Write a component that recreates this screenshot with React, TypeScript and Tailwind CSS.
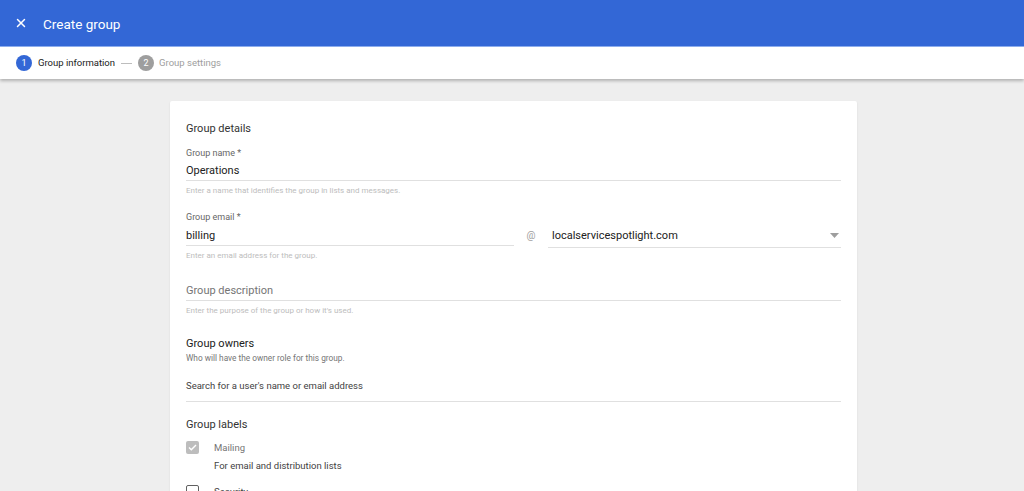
import { X } from 'lucide-react'

function Field({ label, value, placeholder, helper, pt = 4 }: { label?: string; value?: string; placeholder?: string; helper?: string; pt?: number }) {
  return (
    <div className="flex flex-col">
      {label && <div className="text-[9px] leading-[12px] text-[#666]">{label}</div>}
      <div className={(pt === 5 ? 'pt-[5px]' : pt === 0 ? 'pt-0' : 'pt-[4px]') + ' border-b border-[#e0e0e0] pb-[1px] leading-[16px] text-[11px]'}>
        <span className={value ? 'text-[#212121]' : 'text-[#757575]'}>{value ?? placeholder}</span>
      </div>
      {helper && <div className="text-[8px] leading-[10px] text-[#bdbdbd] mt-[5px]">{helper}</div>}
    </div>
  )
}

export default function App() {
  return (
    <div className="h-[491px] overflow-hidden bg-[#eeeeee] font-['Roboto',sans-serif]">
      <div className="h-[47px] bg-[#3367d6] flex items-center pl-[14px] gap-[15px] border-b border-[#8fb0f0]">
        <X size={14} strokeWidth={2.5} className="text-white" />
        <span className="text-white text-[13.5px] leading-[18px] pt-[1px]">Create group</span>
      </div>
      <div className="h-[32px] bg-white flex items-center px-[16px] shadow-[0_2px_3px_rgba(0,0,0,0.25)] relative">
        <div className="w-[16px] h-[16px] rounded-full bg-[#3367d6] text-white text-[9px] leading-[16px] flex items-center justify-center">1</div>
        <span className="ml-[6px] text-[9.5px] leading-[14px] text-[#212121]">Group information</span>
        <div className="ml-[6px] w-[11px] h-px bg-[#bdbdbd]" />
        <div className="ml-[6px] w-[16px] h-[16px] rounded-full bg-[#9e9e9e] text-white text-[9px] leading-[16px] flex items-center justify-center">2</div>
        <span className="ml-[5px] text-[9.5px] leading-[14px] text-[#9e9e9e]">Group settings</span>
      </div>
      <div className="flex justify-start pl-[170px] pt-[22px]">
        <div className="w-[687px] bg-white rounded-t-[2px] shadow-[0_1px_2px_rgba(0,0,0,0.1)] px-[16px] pt-[20px] pb-[40px] flex flex-col">
          <div className="text-[11px] leading-[16px] text-[#333]">Group details</div>
          <div className="mt-[10px]">
            <Field label="Group name *" value="Operations" helper="Enter a name that identifies the group in lists and messages." />
          </div>
          <div className="mt-[15px] flex items-start">
            <div className="w-[328px]">
              <Field label="Group email *" value="billing" pt={5} helper="Enter an email address for the group." />
            </div>
            <div className="w-[34px] pt-[18px] text-[10px] leading-[14px] text-[#9e9e9e] text-center">@</div>
            <div className="flex-1 pt-[12px]">
              <div className="border-b border-[#e0e0e0] pt-[5px] pb-[3px] pl-[4px] flex items-center justify-between leading-[16px]">
                <span className="text-[11px] text-[#212121]">localservicespotlight.com</span>
                <svg width="9" height="5" viewBox="0 0 9 5" className="mr-[2px] mb-[2px]"><path d="M0 0h9L4.5 5z" fill="#9e9e9e" /></svg>
              </div>
            </div>
          </div>
          <div className="mt-[22px]">
            <Field placeholder="Group description" pt={0} helper="Enter the purpose of the group or how it's used." />
          </div>
          <div className="mt-[20px] text-[11px] leading-[16px] text-[#212121]">Group owners</div>
          <div className="mt-[1px] text-[8.3px] leading-[10px] text-[#757575]">Who will have the owner role for this group.</div>
          <div className="mt-[14px] border-b border-[#e0e0e0] pb-[8px] leading-[14px]">
            <span className="text-[9.5px] text-[#424242]">Search for a user's name or email address</span>
          </div>
          <div className="mt-[15px] text-[11px] leading-[16px] text-[#333]">Group labels</div>
          <div className="mt-[8px] flex items-start">
            <div className="w-[13px] h-[13px] rounded-[2px] bg-[#bdbdbd] flex items-center justify-center">
              <svg width="9" height="7" viewBox="0 0 9 7"><path d="M1 3.5l2.3 2.3L8 1" stroke="white" strokeWidth="1.4" fill="none" /></svg>
            </div>
            <div className="ml-[15px] flex flex-col">
              <span className="text-[9.5px] leading-[14px] text-[#757575]">Mailing</span>
              <span className="mt-[4px] text-[9.5px] leading-[14px] text-[#424242]">For email and distribution lists</span>
            </div>
          </div>
          <div className="mt-[12px] flex items-start">
            <div className="w-[13px] h-[13px] rounded-[2px] border-[1.5px] border-[#616161]" />
            <span className="ml-[15px] text-[9.5px] leading-[14px] text-[#424242]">Security</span>
          </div>
        </div>
      </div>
    </div>
  )
}
